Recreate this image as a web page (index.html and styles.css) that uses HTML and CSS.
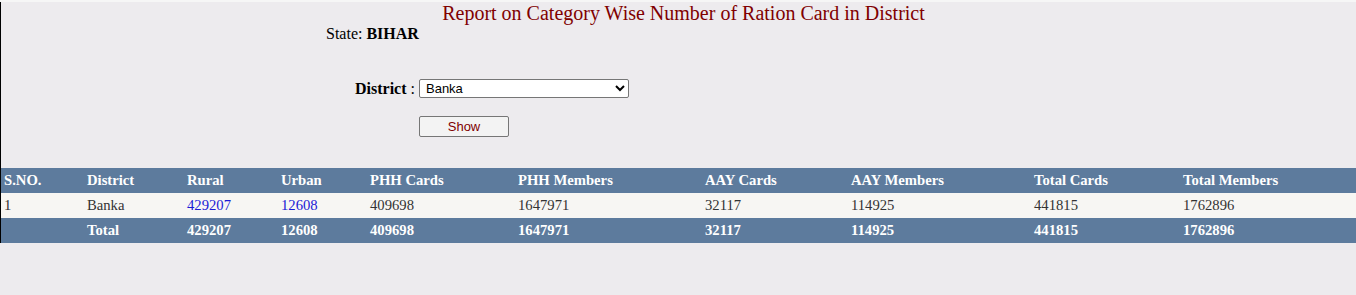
FILE: index.html
```html
<!DOCTYPE html>
<html>
<head>
<meta charset="utf-8">
<title>Report on Category Wise Number of Ration Card in District</title>
<link rel="stylesheet" href="styles.css">
</head>
<body>
<div class="frame">
  <h1 class="title">Report on Category Wise Number of Ration Card in District</h1>
  <div class="state">State: <b>BIHAR</b></div>
  <div class="filter">
    <label class="lbl" for="dist"><b>District</b> :</label>
    <select id="dist" class="sel"><option>Banka</option></select>
  </div>
  <div class="actions">
    <button class="btn" type="button">Show</button>
  </div>
  <table class="grid">
    <colgroup>
      <col class="c1"><col class="c2"><col class="c3"><col class="c4"><col class="c5">
      <col class="c6"><col class="c7"><col class="c8"><col class="c9"><col class="c10">
    </colgroup>
    <thead>
      <tr class="hdr">
        <th>S.NO.</th><th>District</th><th>Rural</th><th>Urban</th><th>PHH Cards</th>
        <th>PHH Members</th><th>AAY Cards</th><th>AAY Members</th><th>Total Cards</th><th>Total Members</th>
      </tr>
    </thead>
    <tbody>
      <tr class="row">
        <td>1</td><td>Banka</td><td><a href="#">429207</a></td><td><a href="#">12608</a></td><td>409698</td>
        <td>1647971</td><td>32117</td><td>114925</td><td>441815</td><td>1762896</td>
      </tr>
    </tbody>
    <tfoot>
      <tr class="hdr">
        <td></td><td>Total</td><td>429207</td><td>12608</td><td>409698</td>
        <td>1647971</td><td>32117</td><td>114925</td><td>441815</td><td>1762896</td>
      </tr>
    </tfoot>
  </table>
</div>
</body>
</html>
```
FILE: styles.css
```css
html, body {
  margin: 0;
  padding: 0;
}
body {
  background: #edebee;
  border-top: 2px solid #f6f6f6;
  font-family: "Liberation Serif", "Times New Roman", serif;
  color: #000;
}
.frame {
  border-left: 1px solid #000;
}
.title {
  margin: 0;
  padding-left: 10px;
  font-size: 20px;
  font-weight: normal;
  line-height: 23px;
  color: #800000;
  text-align: center;
}
.state {
  margin: 0 0 0 325px;
  font-size: 16px;
  line-height: 18px;
}
.filter {
  display: flex;
  align-items: center;
  margin-top: 36px;
  padding-left: 354px;
  height: 19px;
}
.lbl {
  font-size: 16px;
  margin-right: 4px;
}
.sel {
  width: 210px;
  height: 19px;
  font-family: "Liberation Sans", Arial, sans-serif;
  font-size: 13px;
  color: #000;
  background: #fff;
  border: 1px solid #767676;
  border-radius: 2px;
  padding: 0 0 0 2px;
  margin: 0;
}
.actions {
  margin-top: 18px;
  padding-left: 418px;
  height: 21px;
}
.btn {
  width: 90px;
  height: 21px;
  margin: 0;
  padding: 0;
  font-family: "Liberation Sans", Arial, sans-serif;
  font-size: 13px;
  color: #800000;
  background: #f3f3f3;
  border: 1px solid #767676;
  border-radius: 2px;
}
.grid {
  margin-top: 31px;
  width: 100%;
  border-collapse: collapse;
  table-layout: fixed;
  font-size: 14.67px;
}
.c1 { width: 83px; }
.c2 { width: 100px; }
.c3 { width: 94px; }
.c4 { width: 89px; }
.c5 { width: 148px; }
.c6 { width: 187px; }
.c7 { width: 146px; }
.c8 { width: 183px; }
.c9 { width: 149px; }
.c10 { width: auto; }
.grid th, .grid td {
  padding: 4px 3px;
  line-height: 17px;
  text-align: left;
  white-space: nowrap;
}
.hdr {
  background: #5d7b9d;
  color: #fff;
  font-weight: bold;
}
.row {
  background: #f7f6f3;
  color: #333333;
}
.row a {
  color: #1a1ad6;
  text-decoration: none;
}
```
